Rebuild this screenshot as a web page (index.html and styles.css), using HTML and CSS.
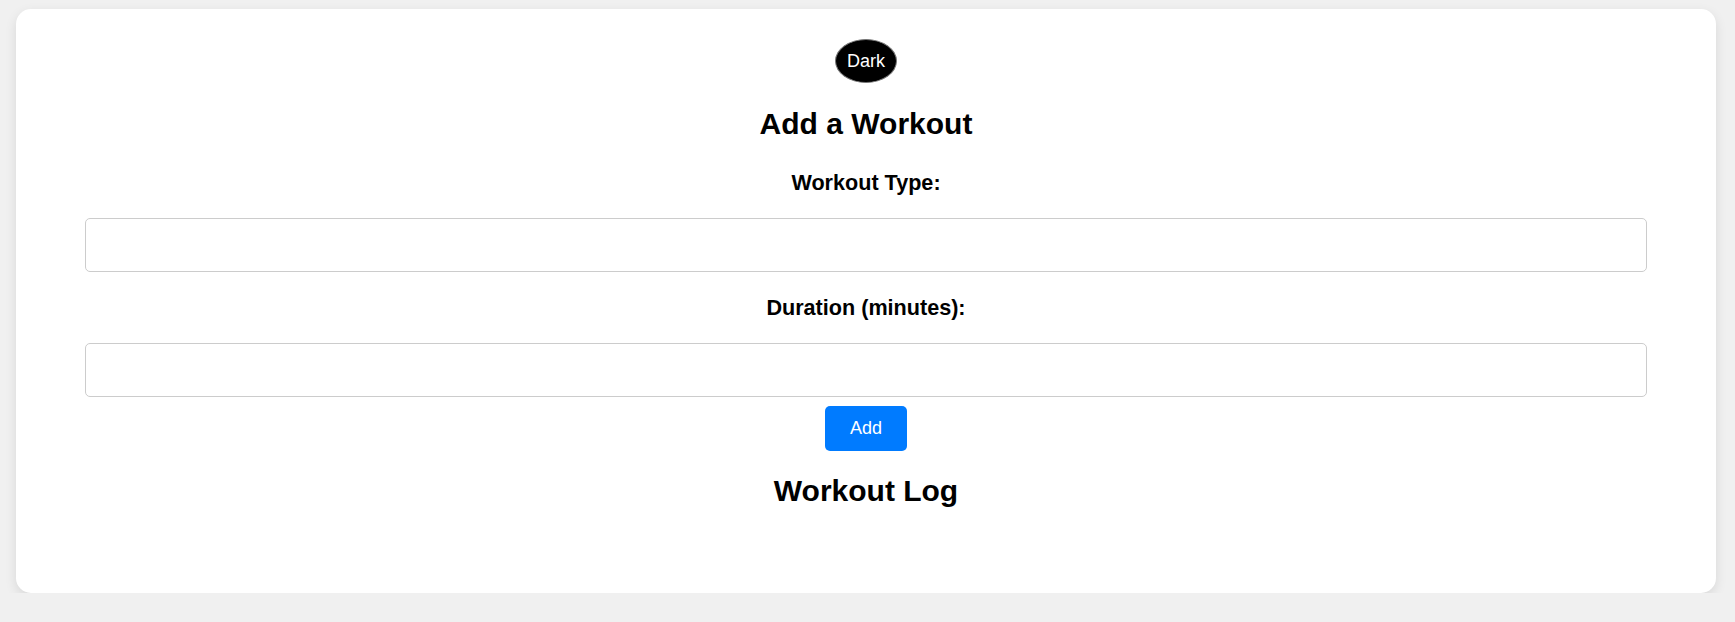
FILE: index.html
```html
<!DOCTYPE html>
<html lang="en">
<head>
<meta charset="utf-8">
<title>Workout Tracker</title>
<link rel="stylesheet" href="styles.css">
</head>
<body>
  <div class="card">
    <button class="theme-btn" type="button">Dark</button>
    <h2 class="title">Add a Workout</h2>
    <label class="field-label" for="type">Workout Type:</label>
    <input class="field" id="type" type="text">
    <label class="field-label" for="duration">Duration (minutes):</label>
    <input class="field" id="duration" type="number">
    <button class="add-btn" type="button">Add</button>
    <h2 class="title log-title">Workout Log</h2>
  </div>
</body>
</html>
```
FILE: styles.css
```css
html {
  background: #f0f0f0;
}
html, body {
  margin: 0;
  padding: 0;
}
body {
  font-family: "Liberation Sans", Arial, sans-serif;
  color: #000;
  padding-top: 9px;
}
.card {
  background: #fff;
  border-radius: 15px;
  box-shadow: 0 4px 12px rgba(0, 0, 0, 0.1);
  margin: 0 19px 0 16px;
  padding: 30px 69px 85px;
  display: flex;
  flex-direction: column;
  align-items: center;
}
.theme-btn {
  font-family: "Liberation Sans", Arial, sans-serif;
  font-size: 18px;
  line-height: 20px;
  padding: 11px 11px;
  background: #000;
  color: #fff;
  border: 1px solid #777;
  border-radius: 50%;
  margin: 0;
  cursor: pointer;
}
.title {
  font-size: 30px;
  line-height: 34px;
  font-weight: bold;
  margin: 24px 0 0;
}
.field-label {
  font-size: 21.6px;
  line-height: 25px;
  font-weight: bold;
  margin-top: 29px;
}
.field + .field-label {
  margin-top: 23px;
}
.field {
  align-self: stretch;
  box-sizing: border-box;
  width: 100%;
  height: 54px;
  margin: 23px 0 0;
  border: 1px solid #ccc;
  border-radius: 5px;
  background: #fff;
  padding: 0 10px;
  font-size: 18px;
  font-family: "Liberation Sans", Arial, sans-serif;
}
.add-btn {
  font-family: "Liberation Sans", Arial, sans-serif;
  font-size: 18px;
  line-height: 21px;
  padding: 12px 25px;
  margin-top: 9px;
  background: #007bff;
  color: #fff;
  border: none;
  border-radius: 5px;
  cursor: pointer;
}
.log-title {
  margin-top: 23px;
}
```
